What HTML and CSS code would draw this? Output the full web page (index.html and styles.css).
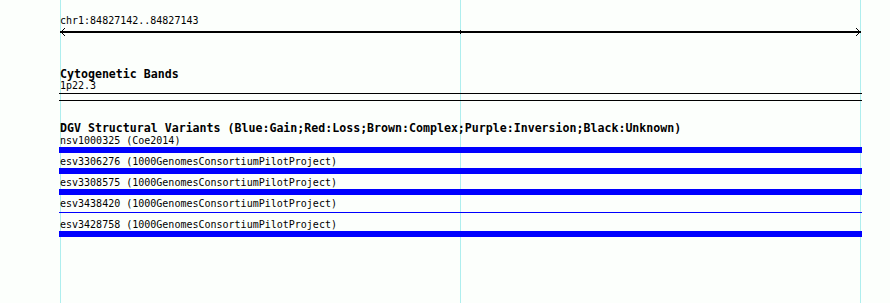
FILE: index.html
```html
<!DOCTYPE html>
<html lang="en">
<head>
    <meta charset="UTF-8">
    <title>chr1:84827142..84827143</title>
    <link rel="stylesheet" href="styles.css">
</head>
<body>
    <div class="track-view">
        <div class="ruler">
            <div class="ruler-label">chr1:84827142..84827143</div>
            <svg class="ruler-axis" width="803" height="9" viewBox="0 0 803 9">
                <rect x="1" y="4" width="801" height="2" fill="#000"/>
                <rect x="401" y="3" width="1" height="4" fill="#000"/>
                <polyline points="6,1 2,5 6,9" fill="none" stroke="#000" stroke-width="1"/>
                <polyline points="797,1 801,5 797,9" fill="none" stroke="#000" stroke-width="1"/>
            </svg>
        </div>

        <div class="track cyto-track">
            <div class="track-title">Cytogenetic Bands</div>
            <div class="feature-label">1p22.3</div>
            <div class="band-box"></div>
        </div>

        <div class="track dgv-track">
            <div class="track-title">DGV Structural Variants (Blue:Gain;Red:Loss;Brown:Complex;Purple:Inversion;Black:Unknown)</div>
            <div class="feature">
                <div class="feature-label">nsv1000325 (Coe2014)</div>
                <div class="bar"></div>
            </div>
            <div class="feature">
                <div class="feature-label">esv3306276 (1000GenomesConsortiumPilotProject)</div>
                <div class="bar"></div>
            </div>
            <div class="feature">
                <div class="feature-label">esv3308575 (1000GenomesConsortiumPilotProject)</div>
                <div class="bar"></div>
            </div>
            <div class="feature">
                <div class="feature-label">esv3438420 (1000GenomesConsortiumPilotProject)</div>
                <div class="bar bar-thin"></div>
            </div>
            <div class="feature">
                <div class="feature-label">esv3428758 (1000GenomesConsortiumPilotProject)</div>
                <div class="bar"></div>
            </div>
        </div>
    </div>
</body>
</html>
```

FILE: styles.css
```css
body {
    margin: 0;
    min-height: 303px;
    font-family: "DejaVu Sans Mono", "Liberation Mono", monospace;
    font-size: 10px;
    color: #000;
    background-color: #fcfffc;
    background-image:
        linear-gradient(#aeeeee, #aeeeee),
        linear-gradient(#aeeeee, #aeeeee),
        linear-gradient(#aeeeee, #aeeeee);
    background-size: 1px 100%;
    background-position: 60px 0, 460px 0, 860px 0;
    background-repeat: no-repeat;
}
.track-view {
    margin-left: 59px;
    width: 803px;
    padding-top: 15px;
}
.ruler-label {
    line-height: 12px;
    padding-left: 1px;
}
.ruler-axis {
    display: block;
}
.track-title {
    font-weight: bold;
    font-size: 11.6px;
    line-height: 11px;
    padding-left: 1px;
    white-space: nowrap;
}
.feature-label {
    line-height: 13px;
    padding-left: 1px;
    white-space: nowrap;
}
.cyto-track {
    margin-top: 33px;
}
.cyto-track .feature-label {
    line-height: 11px;
}
.band-box {
    margin-top: 2px;
    height: 6px;
    border-top: 1px solid #000;
    border-bottom: 1px solid #000;
}
.dgv-track {
    margin-top: 22px;
}
.feature {
    padding-bottom: 2px;
}
.bar {
    height: 6px;
    background-color: #0000ff;
}
.bar-thin {
    background-color: transparent;
    background-image: linear-gradient(#0000ff, #0000ff);
    background-size: 100% 1px;
    background-position: 0 2px;
    background-repeat: no-repeat;
}
```
